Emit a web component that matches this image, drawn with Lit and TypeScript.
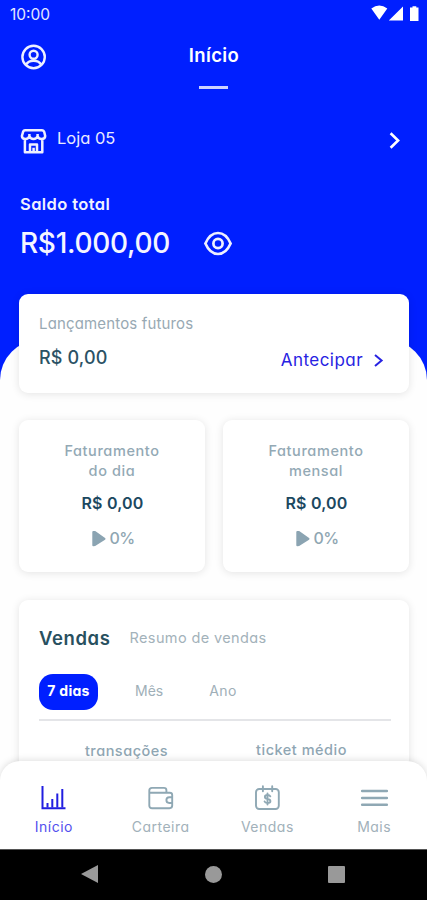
import { LitElement, html, svg, css } from "lit";
import { customElement, property } from "lit/decorators.js";

const base = css`
  * { box-sizing: border-box; }
  svg { display: block; flex: none; overflow: visible; }
  .ink { white-space: nowrap; }
`;

const icons: Record<string, unknown> = {
  chart: svg`<svg width="26" height="26" viewBox="0 0 26 26" fill="none" stroke="currentColor" stroke-width="2">
    <path d="M2.5 1V24M1.5 23.3H25.5"/><path d="M7.5 18V22.5M12.3 14V22.5M17.3 8.5V22.5M22.3 4V22.5" /></svg>`,
  wallet: svg`<svg width="26" height="26" viewBox="0 0 26 26" fill="none" stroke="currentColor" stroke-width="1.9" stroke-linejoin="round">
    <path d="M2.8 7.8H22.7Q25.2 7.8 25.2 10V20.6Q25.2 23.2 22.5 23.2H5.1Q2.3 23.2 2.3 20.4V5.5Q2.3 2.9 5 2.9H16.9Q19.4 2.9 19.4 5.2V7.8M25.1 12.2H22.3A2.9 2.9 0 0 0 22.3 18H25.1"/></svg>`,
  sales: svg`<svg width="26" height="26" viewBox="0 0 26 26" fill="none" stroke="currentColor" stroke-width="1.9" stroke-linecap="round">
    <rect x="2" y="4" width="22.8" height="20" rx="3.2"/><path d="M8.9 1.3V6.3M18.2 1.3V6.3"/>
    <path d="M16.3 11.3Q15.7 10 13.5 10Q10.9 10 10.9 11.9Q10.9 13.5 13.5 13.9Q16.4 14.3 16.4 16.2Q16.4 18 13.5 18Q11.1 18 10.6 16.5M13.5 8.5V19.5"/></svg>`,
  menu: svg`<svg width="28" height="26" viewBox="0 0 28 26" fill="none" stroke="currentColor" stroke-width="2.4" stroke-linecap="round">
    <path d="M2.1 6H26.9M2.1 13H26.9M2.1 19.8H26.9"/></svg>`,
};

@customElement("metric-card")
class MetricCard extends LitElement {
  @property() first = "";
  @property() second = "";
  static styles = [base, css`
    :host { display: flex; flex-direction: column; align-items: center; flex: 1; height: 152px; padding-top: 21px;
      background: #fff; border-radius: 9px; box-shadow: 0 1px 9px rgba(0,0,0,.11); }
    .name { font-size: 14.5px; line-height: 20px; font-weight: 500; color: #93a9b5; text-align: center; letter-spacing: .6px; }
    .value { margin-top: 12px; padding-left: 1px; font-size: 16px; line-height: 20px; font-weight: 600; color: #1c485f; letter-spacing: .2px; }
    .trend { display: flex; align-items: center; gap: 4px; height: 20px; margin-top: 15px; padding-left: 2px; font-size: 16px; font-weight: 500; color: #8fa6b2; letter-spacing: -.7px; }
  `];
  render() {
    return html`
      <div class="name ink">${this.first}<br>${this.second}</div>
      <div class="value ink">R$ 0,00</div>
      <div class="trend ink">
        <svg width="14" height="16" viewBox="0 0 14 16" fill="#8ba4b2" stroke="#8ba4b2" stroke-width="2" stroke-linejoin="round"><path d="M1.3 2V15.3L3 15L12.5 8.8L3 2Z"/></svg>
        <span>0%</span>
      </div>`;
  }
}

@customElement("tab-item")
class TabItem extends LitElement {
  @property() icon = "";
  @property() label = "";
  static styles = [base, css`
    :host { display: flex; flex-direction: column; align-items: center; width: 107px; padding-top: 24px; color: #8fa8b4; }
    :host([active]) { color: #211ee0; }
    .label { margin-top: 6px; padding-left: 1px; font-size: 14px; line-height: 20px; color: #a2b1ba; letter-spacing: .5px; }
    :host([active]) .label { color: #5350ee; }
  `];
  render() {
    return html`${icons[this.icon]}<span class="label ink">${this.label}</span>`;
  }
}

@customElement("app-root")
class AppRoot extends LitElement {
  static styles = [base, css`
    :host { display: flex; flex-direction: column; position: relative; width: 427px; height: 900px; overflow: hidden;
      background: #001fff; color: #fff; font-family: Inter, "Liberation Sans", sans-serif; font-feature-settings: "cv11" 1; }
    .status { display: flex; justify-content: space-between; height: 29px; padding: 4px 8px 0 10px; }
    .clock { font-size: 15.5px; line-height: 21px; color: #e4e8ff; }
    .topbar { display: grid; grid-template-columns: 1fr auto 1fr; height: 92px; padding: 15px 20px 0; }
    .title { display: flex; flex-direction: column; align-items: center; font-size: 18.5px; line-height: 22px; font-weight: 600; letter-spacing: .4px; }
    .title span { padding-left: 1px; }
    .bar { width: 29px; height: 3px; margin-top: 20px; background: #cdd2ff; }
    .store { display: flex; height: 72px; padding: 0 24px 0 20px; }
    .store svg { margin-top: 7px; }
    .storename { flex: 1; margin-left: 10px; font-size: 16.5px; line-height: 34px; color: #e8ebff; }
    .total { height: 147px; padding: 1px 20px 0; }
    .caption { font-size: 16.5px; line-height: 20px; font-weight: 600; letter-spacing: .4px; color: #f0f2ff; }
    .amount { display: flex; align-items: center; justify-content: space-between; width: 212px; height: 40px; margin-top: 9px; font-size: 28px; font-weight: 500; letter-spacing: -.3px; color: #f4f5ff; }
    .sheet { flex: 1; padding: 0 18px 0 19px; border-radius: 40px 40px 0 0; background: #fefefe; }
    .card { background: #fff; border-radius: 9px; box-shadow: 0 1px 9px rgba(0,0,0,.11); }
    .future { display: flex; justify-content: space-between; height: 99px; margin-top: -46px; padding: 20px 26px 0 20px; }
    .muted { font-size: 15px; line-height: 20px; letter-spacing: .15px; color: #98a9b3; }
    .strong { margin-top: 14px; font-size: 18px; line-height: 20px; font-weight: 500; letter-spacing: .15px; color: #2b5265; }
    .action { display: flex; align-items: center; gap: 11px; height: 20px; margin-top: 36px; font-size: 17px; letter-spacing: .45px; color: #2722e2; }
    .metrics { display: flex; gap: 18px; margin-top: 27px; }
    .sales { height: 220px; margin-top: 28px; padding: 25px 18px 0 20px; }
    .heading { display: flex; align-items: center; gap: 19px; height: 25px; }
    .heading b { font-size: 18.5px; font-weight: 600; letter-spacing: .6px; color: #28505f; }
    .heading span { font-size: 14.5px; letter-spacing: .38px; color: #a3b2ba; }
    .ranges { display: flex; align-items: center; height: 36px; margin-top: 24px; font-size: 14px; line-height: 20px; color: #a0afb8; }
    .pill { width: 59px; height: 36px; border-radius: 14px; background: #001fff; color: #fff; font-weight: 700; line-height: 34px; letter-spacing: .3px; text-align: center; }
    .month { margin: -2px 0 0 37px; }
    .year { margin: -2px 0 0 46px; letter-spacing: .4px; }
    .columns { display: grid; grid-template-columns: 175px 1fr; margin-top: 9px; padding-top: 20px; border-top: 2px solid #e4e5e8; font-size: 14.5px; line-height: 20px; font-weight: 500; letter-spacing: .5px; color: #8fa6b3; text-align: center; }
    .ticket { margin: -1px 0 0 -2px; }
    .tabs { position: absolute; left: 0; right: 0; bottom: 51px; display: flex; height: 88px; border-radius: 20px 20px 0 0; background: #fff; box-shadow: 0 -1px 7px rgba(0,0,0,.13); }
    .system { position: absolute; left: 0; right: 0; bottom: 0; display: flex; justify-content: space-between; align-items: center; height: 51px; padding: 0 82px 2px 81px; background: #000; border-top: 1px solid #555; }
  `];
  render() {
    return html`
      <div class="status">
        <span class="clock ink">10:00</span>
        <svg width="48" height="16" viewBox="0 0 48 16" fill="#fff"><path d="M0.3 4.4Q8.3 -1.3 16.3 4.4L8.3 15.8ZM17.8 16.5L32 2.5V16.5ZM39 3.5H41.5V2.2H45.3V3.5H47.5V17H39Z"/></svg>
      </div>
      <div class="topbar">
        <svg width="27" height="27" viewBox="0 0 27 27" fill="none" stroke="#eef0ff" stroke-width="2.4"><circle cx="13.6" cy="13" r="11.2"/><circle cx="13.6" cy="10.7" r="4"/><path d="M6 20.8Q8 16.7 13.6 16.7Q19.2 16.7 21.2 20.8"/></svg>
        <div class="title ink"><span>Início</span><i class="bar"></i></div>
      </div>
      <div class="store">
        <svg width="27" height="26" viewBox="0 0 27 26" fill="none" stroke="#eef0ff" stroke-width="2.5" stroke-linejoin="round"><path d="M5.2 2.2H21.8Q23.7 2.2 24.3 4.2L25.2 8Q25.2 11 21.5 11Q18.4 11 17.6 8.2Q16.6 11 13.5 11Q10.4 11 9.4 8.2Q8.4 11 5.5 11Q2 11 1.9 8L3 4.2Q3.4 2.2 5.2 2.2ZM9.4 8.5V6M17.6 8.5V6M4.9 11V24.3H22.3V11M10 24V16.6H17V24M13.6 24V19.8"/></svg>
        <span class="storename ink">Loja 05</span>
        <svg width="18" height="26" viewBox="0 0 18 26" fill="none" stroke="#fff" stroke-width="2.6"><path d="M5.6 5.2L13.1 12.5L5.6 19.8"/></svg>
      </div>
      <div class="total">
        <div class="caption ink">Saldo total</div>
        <div class="amount ink"><span class="sum">R$1.000,00</span>
          <svg width="28" height="26" viewBox="0 0 28 26" fill="none" stroke="#eef0ff" stroke-width="2.7"><path d="M1.4 13.5Q6 3 14 3Q22 3 26.6 13.5Q22 24 14 24Q6 24 1.4 13.5Z"/><circle cx="14" cy="13.5" r="4.6"/></svg>
        </div>
      </div>
      <div class="sheet">
        <div class="card future">
          <div><div class="muted ink">Lançamentos futuros</div><div class="strong ink">R$ 0,00</div></div>
          <div class="action ink"><span>Antecipar</span><svg width="9" height="14" viewBox="0 0 9 14" fill="none" stroke="#2722e2" stroke-width="2"><path d="M1 2L7.6 7.5L1 13"/></svg></div>
        </div>
        <div class="metrics">
          <metric-card first="Faturamento" second="do dia"></metric-card>
          <metric-card first="Faturamento" second="mensal"></metric-card>
        </div>
        <div class="card sales">
          <div class="heading ink"><b>Vendas</b><span>Resumo de vendas</span></div>
          <div class="ranges ink"><span class="pill">7 dias</span><span class="month">Mês</span><span class="year">Ano</span></div>
          <div class="columns ink"><span>transações</span><span class="ticket">ticket médio</span></div>
        </div>
      </div>
      <nav class="tabs">
        <tab-item active icon="chart" label="Início"></tab-item>
        <tab-item icon="wallet" label="Carteira"></tab-item>
        <tab-item icon="sales" label="Vendas"></tab-item>
        <tab-item icon="menu" label="Mais"></tab-item>
      </nav>
      <div class="system">
        <svg width="17" height="18" viewBox="0 0 17 18" fill="#999"><path d="M0 9L17 0V18Z"/></svg>
        <svg width="17" height="17" viewBox="0 0 17 17" fill="#999"><circle cx="8.5" cy="8.5" r="8.5"/></svg>
        <svg width="17" height="17" viewBox="0 0 17 17" fill="#999"><rect width="17" height="17" rx="1"/></svg>
      </div>`;
  }
}
